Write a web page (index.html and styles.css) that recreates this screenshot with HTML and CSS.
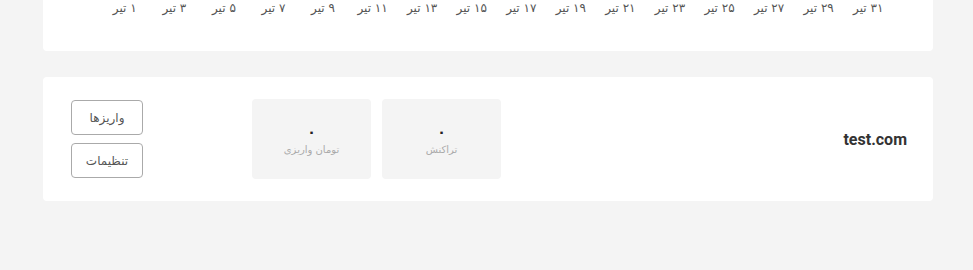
FILE: index.html
```html
<!DOCTYPE html>
<html lang="fa" dir="rtl">
<head>
    <meta charset="UTF-8">
    <meta name="viewport" content="width=device-width, initial-scale=1.0">
    <title>درگاه‌ها</title>
    <link rel="stylesheet" href="styles.css">
</head>
<body>
    <div class="card chart-card">
        <div class="axis">
            <span>۳۱ تیر</span>
            <span>۲۹ تیر</span>
            <span>۲۷ تیر</span>
            <span>۲۵ تیر</span>
            <span>۲۳ تیر</span>
            <span>۲۱ تیر</span>
            <span>۱۹ تیر</span>
            <span>۱۷ تیر</span>
            <span>۱۵ تیر</span>
            <span>۱۳ تیر</span>
            <span>۱۱ تیر</span>
            <span>۹ تیر</span>
            <span>۷ تیر</span>
            <span>۵ تیر</span>
            <span>۳ تیر</span>
            <span>۱ تیر</span>
        </div>
    </div>

    <div class="card gateway">
        <div class="domain">test.com</div>
        <div class="stats">
            <div class="stat">
                <div class="stat-value">۰</div>
                <div class="stat-label">تراکنش</div>
            </div>
            <div class="stat">
                <div class="stat-value">۰</div>
                <div class="stat-label">تومان واریزی</div>
            </div>
        </div>
        <div class="actions">
            <button class="btn">واریزها</button>
            <button class="btn">تنظیمات</button>
        </div>
    </div>
</body>
</html>
```

FILE: styles.css
```css
body {
    margin: 0;
    padding: 0 40px 0 43px;
    background-color: #f4f4f4;
    font-family: "DejaVu Sans", sans-serif;
    color: #333;
}
.card {
    background-color: #fff;
    border-radius: 4px;
}
.chart-card {
    height: 51px;
    border-top-left-radius: 0;
    border-top-right-radius: 0;
    padding: 0 40px 0 57px;
}
.axis {
    display: grid;
    grid-template-columns: repeat(16, 1fr);
    padding-top: 1px;
    font-size: 12px;
    color: #555;
}
.axis span {
    text-align: center;
    white-space: nowrap;
}
.gateway {
    margin-top: 26px;
    height: 124px;
    display: flex;
    align-items: center;
    padding: 0 26px 0 28px;
    box-sizing: border-box;
}
.domain {
    flex: 1;
    font-family: Roboto, sans-serif;
    font-weight: bold;
    font-size: 16px;
    color: #333;
    direction: ltr;
    text-align: right;
}
.stats {
    display: flex;
    gap: 11px;
    margin-left: 109px;
}
.stat {
    width: 119px;
    height: 80px;
    background-color: #f4f4f4;
    border-radius: 4px;
    display: flex;
    flex-direction: column;
    align-items: center;
    justify-content: center;
    gap: 4px;
}
.stat-value {
    font-size: 14px;
    font-weight: bold;
    color: #222;
}
.stat-label {
    font-size: 10px;
    color: #aaa;
}
.actions {
    display: flex;
    flex-direction: column;
    gap: 8px;
}
.btn {
    width: 72px;
    height: 35px;
    background-color: #fff;
    border: 1px solid #aaa;
    border-radius: 4px;
    font-family: "DejaVu Sans", sans-serif;
    font-size: 12px;
    color: #555;
    cursor: pointer;
}
```
